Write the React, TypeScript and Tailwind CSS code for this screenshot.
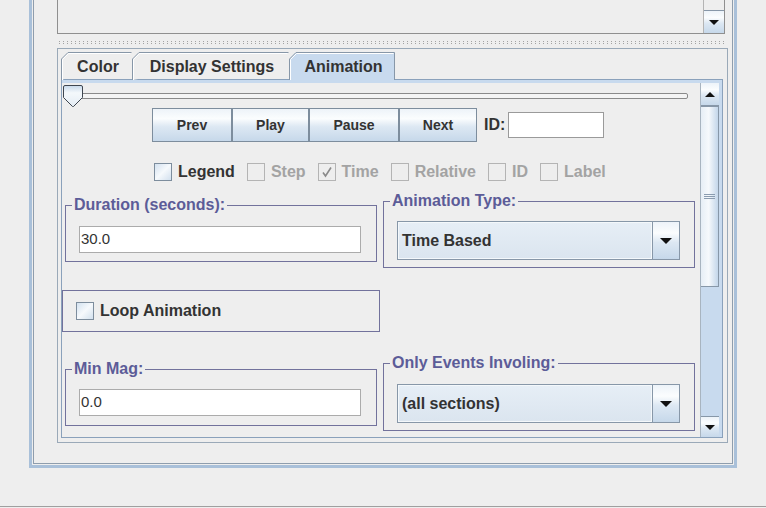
import React from 'react';

const btnGrad =
  'bg-[linear-gradient(#edf3f9,#fbfdfe_30%,#dde8f3_55%,#c6d8ea)]';

function TriDown({ w = 10, h = 5 }: { w?: number; h?: number }) {
  return (
    <svg width={w} height={h} viewBox={`0 0 ${w} ${h}`}>
      <path d={`M0 0H${w}L${w / 2} ${h}Z`} fill="#111" />
    </svg>
  );
}

function TriUp({ w = 10, h = 5 }: { w?: number; h?: number }) {
  return (
    <svg width={w} height={h} viewBox={`0 0 ${w} ${h}`}>
      <path d={`M0 ${h}H${w}L${w / 2} 0Z`} fill="#111" />
    </svg>
  );
}

function Tab({ w, label, selected, last }: { w: number; label: string; selected?: boolean; last?: boolean }) {
  const H = 28;
  return (
    <div
      className={`relative shrink-0 flex justify-center pt-[7px] text-[16px] leading-[16px] font-bold text-[#333333] ${
        selected ? 'z-10 h-[28px]' : 'h-[27px]'
      }`}
      style={{ width: w }}
    >
      <svg className="absolute inset-0" width={w} height={H}>
        <path
          d={`M0.5 ${H}V7L7 0.5H${w - 0.5}${last ? `V${H}` : ''}`}
          fill={selected ? '#c8daee' : '#eeeeee'}
          stroke="#8797a8"
        />
        <path d={`M1.5 ${H}V7.5L7.5 1.5H${w - 1.5}`} fill="none" stroke="#ffffff" />
      </svg>
      <span className="relative pl-[3px]">{label}</span>
    </div>
  );
}

function Check({ label, enabled, checked }: { label: string; enabled?: boolean; checked?: boolean }) {
  return (
    <div className="flex items-center gap-[6px] h-[18px]">
      <div
        className={`w-[18px] h-[18px] border flex items-center justify-center ${
          enabled
            ? 'border-[#7d8d9d] bg-[linear-gradient(135deg,#d4e2f0,#f6f9fc_50%,#d2e0ee)]'
            : 'border-[#b4b4b4] bg-[#eeeeee]'
        }`}
      >
        {checked && (
          <svg width="12" height="12" viewBox="0 0 12 12">
            <path d="M2 6.5L4.5 10L10 1.5" fill="none" stroke="#8a8a8a" strokeWidth="1.6" />
          </svg>
        )}
      </div>
      <span className={`text-[16px] leading-[18px] font-bold ${enabled ? 'text-[#333333]' : 'text-[#a3a3a3]'}`}>
        {label}
      </span>
    </div>
  );
}

function Titled({ title, h, children }: { title: string; h: number; children: React.ReactNode }) {
  return (
    <fieldset className="w-[312px] border border-[#72729c] shrink-0" style={{ height: h }}>
      <legend className="ml-[6px] px-[2px] text-[16px] leading-[16px] font-bold text-[#5c5c98]">{title}</legend>
      {children}
    </fieldset>
  );
}

function TextField({ value }: { value: string }) {
  return (
    <div className="ml-[13px] w-[282px] h-[27px] border border-[#ababab] bg-white flex items-center pl-px text-[15px] text-[#333333]">
      {value}
    </div>
  );
}

function Combo({ value }: { value: string }) {
  return (
    <div className="ml-[13px] w-[283px] h-[39px] border border-[#8797a8] flex">
      <div className="flex-1 flex items-center pl-[3px] border border-[#f4f8fb] bg-[linear-gradient(#e6eef6,#dbe5ef)] text-[16px] font-bold text-[#333333]">
        {value}
      </div>
      <div className={`w-[27px] border-l border-[#8797a8] flex items-center justify-center ${btnGrad}`}>
        <TriDown w={12} h={6} />
      </div>
    </div>
  );
}

function Button({ w, label }: { w: number; label: string }) {
  return (
    <div
      className={`h-[34px] shrink-0 border border-[#7d8d9d] flex items-center justify-center text-[14px] font-bold text-[#333333] ${btnGrad}`}
      style={{ width: w }}
    >
      {label}
    </div>
  );
}

export default function App() {
  return (
    <div className="w-[766px] h-[508px] bg-[#eeeeee] overflow-hidden flex flex-col font-['Liberation_Sans',Arial,sans-serif] text-[#333333]">
      {/* outer frame */}
      <div className="ml-[29px] -mt-[10px] w-[708px] h-[478px] shrink-0 border-[3px] border-[#a9c0d9] p-px">
        <div className="h-full border border-[#8e9dad] flex flex-col pl-[23px]">
          {/* top text area scroll pane */}
          <div className="w-[668px] h-[39px] shrink-0 border-l border-b border-r border-[#8f8f8f] flex">
            <div className="flex-1" />
            <div className="w-[21px] border-l border-[#b4b4b4] flex flex-col">
              <div className="flex-1" />
              <div className={`h-[23px] border-t border-[#8797a8] flex items-center justify-center ${btnGrad}`}>
                <TriDown w={10} h={5} />
              </div>
            </div>
          </div>

          {/* split divider */}
          <div className="h-[14px] shrink-0 pl-[2px] w-[668px]">
            <div className="mt-[7px] h-px bg-[repeating-linear-gradient(90deg,#a3a3a3_0_1px,transparent_1px_4px)]" />
            <div className="mt-px h-px bg-[repeating-linear-gradient(90deg,#a3a3a3_0_1px,transparent_1px_4px)]" />
          </div>

          {/* tabbed pane container */}
          <div className="w-[671px] h-[395px] shrink-0 border border-[#9aa9b8] pl-[3px] pt-[3px] pr-[4px] pb-[4px] flex flex-col">
            <div className="flex items-start h-[27px] shrink-0">
              <Tab w={71} label="Color" />
              <Tab w={157} label="Display Settings" />
              <Tab w={106} label="Animation" selected last />
            </div>

            <div className="flex-1 border border-[#8aa1bb] bg-[#c8daee] flex pt-[3px] pr-[3px]">
              {/* viewport */}
              <div className="flex-1 bg-[#eeeeee] flex flex-col">
                {/* slider */}
                <div className="relative h-[25px] shrink-0">
                  <div className="ml-[5px] mt-[10px] w-[621px] h-[6px] border border-[#8a8a8a] rounded-[2px] bg-[#f4f4f4]" />
                  <svg className="absolute left-px top-[2px]" width="20" height="22" viewBox="0 0 20 22">
                    <defs>
                      <linearGradient id="th" x1="0" y1="0" x2="0" y2="1">
                        <stop offset="0" stopColor="#c6d8ea" />
                        <stop offset="0.35" stopColor="#f4f8fb" />
                        <stop offset="1" stopColor="#e4ecf4" />
                      </linearGradient>
                    </defs>
                    <path
                      d="M2 0.5H18Q19.5 0.5 19.5 2V12.5L10.5 21.5H9.5L0.5 12.5V2Q0.5 0.5 2 0.5Z"
                      fill="url(#th)"
                      stroke="#3f4650"
                    />
                  </svg>
                </div>

                {/* buttons */}
                <div className="h-[34px] shrink-0 flex items-center pl-[90px]">
                  <Button w={80} label="Prev" />
                  <Button w={77} label="Play" />
                  <Button w={90} label="Pause" />
                  <Button w={78} label="Next" />
                  <span className="ml-[7px] text-[16px] font-bold text-[#333333]">ID:</span>
                  <div className="ml-[3px] w-[96px] h-[26px] border border-[#9a9a9a] bg-white" />
                </div>

                {/* checkboxes */}
                <div className="mt-[21px] h-[18px] shrink-0 flex pl-[92px] gap-[12px]">
                  <Check label="Legend" enabled />
                  <Check label="Step" />
                  <Check label="Time" checked />
                  <Check label="Relative" />
                  <Check label="ID" />
                  <Check label="Label" />
                </div>

                {/* row 1 */}
                <div className="mt-[12px] flex items-start shrink-0">
                  <div className="w-[321px] pl-[3px] pt-[4px]">
                    <Titled title="Duration (seconds):" h={65}>
                      <div className="mt-[13px]">
                        <TextField value="30.0" />
                      </div>
                    </Titled>
                  </div>
                  <Titled title="Animation Type:" h={75}>
                    <div className="mt-[12px]">
                      <Combo value="Time Based" />
                    </div>
                  </Titled>
                </div>

                {/* row 2 */}
                <div className="mt-[22px] shrink-0">
                  <div className="w-[318px] h-[42px] border border-[#72729c] flex items-center pl-[13px]">
                    <Check label="Loop Animation" enabled />
                  </div>
                </div>

                {/* row 3 */}
                <div className="mt-[23px] flex items-start shrink-0">
                  <div className="w-[321px] pl-[3px] pt-[6px]">
                    <Titled title="Min Mag:" h={65}>
                      <div className="mt-[12px]">
                        <TextField value="0.0" />
                      </div>
                    </Titled>
                  </div>
                  <Titled title="Only Events Involing:" h={76}>
                    <div className="mt-[13px]">
                      <Combo value="(all sections)" />
                    </div>
                  </Titled>
                </div>
              </div>

              {/* vertical scrollbar */}
              <div className="w-[19px] border-l border-[#a8b4c0] flex flex-col">
                <div className={`h-[23px] border-b border-[#8797a8] flex items-center justify-center ${btnGrad}`}>
                  <TriUp w={10} h={5} />
                </div>
                <div className="h-[181px] border border-l-0 border-[#8797a8] bg-[linear-gradient(90deg,#e6eef6,#f6f9fc_45%,#c3d6ea)] flex flex-col items-center justify-center gap-px">
                  <div className="w-[11px] h-px bg-[#8a9cb0]" />
                  <div className="w-[11px] h-px bg-[#8a9cb0]" />
                  <div className="w-[11px] h-px bg-[#8a9cb0]" />
                </div>
                <div className="flex-1" />
                <div className={`h-[21px] border-t border-[#8797a8] flex items-center justify-center ${btnGrad}`}>
                  <TriDown w={10} h={5} />
                </div>
              </div>
            </div>
          </div>
        </div>
      </div>
      <div className="mt-[38px] h-px bg-[#9f9f9f] shrink-0" />
    </div>
  );
}
